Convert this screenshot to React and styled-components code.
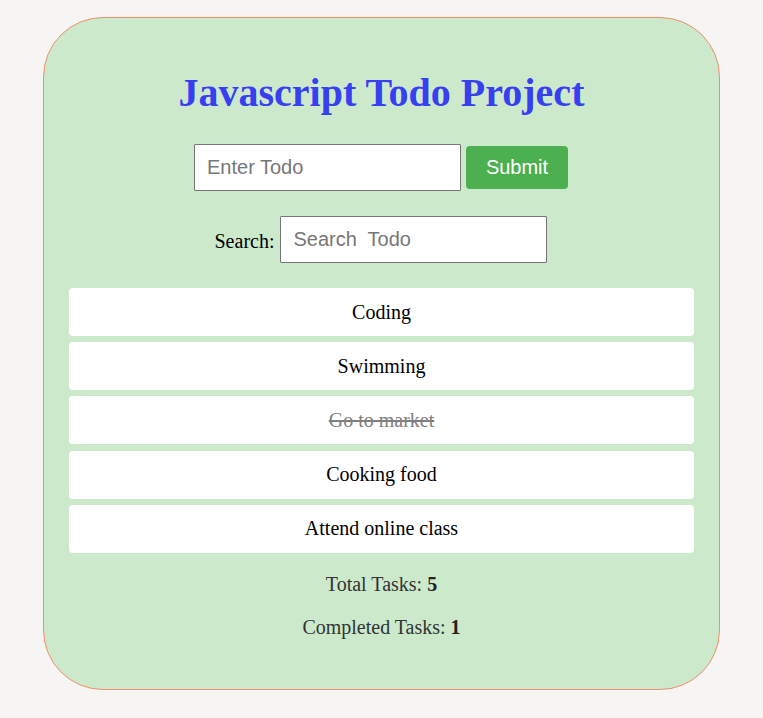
import React from "react";
import styled, { createGlobalStyle, css } from "styled-components";

const Global = createGlobalStyle`
  html, body { margin: 0; padding: 0; background: #f7f5f4; }
  body { font-family: "Liberation Serif", "Times New Roman", serif; }
  #root { padding: 17px 0 28px; }
`;

const Card = styled.div`
  width: 677px;
  margin: 0 auto;
  box-sizing: border-box;
  background: #cce9cc;
  border: 1px solid #f0906a;
  border-radius: 60px;
  padding: 22px 25px 51px;
  display: flex;
  flex-direction: column;
  align-items: stretch;
`;

const Title = styled.h1`
  margin: 30px 0 28px;
  text-align: center;
  font-size: 40px;
  font-weight: bold;
  color: #373ff0;
  line-height: 46px;
`;

const Row = styled.div`
  display: flex;
  justify-content: center;
  align-items: center;
  gap: ${(p) => p.$gap || 5}px;
  margin-bottom: ${(p) => p.$mb || 0}px;
  padding-right: 1px;
`;

const Input = styled.input`
  width: 267px;
  height: 47px;
  box-sizing: border-box;
  border: 1px solid #767676;
  border-radius: 1px;
  padding: 0 12px;
  font-family: "Liberation Sans", Arial, sans-serif;
  font-size: 20px;
  background: #fff;
  outline: none;
  &::placeholder { color: #777; }
`;

const Button = styled.button`
  width: 102px;
  height: 43px;
  border: none;
  border-radius: 4px;
  background: #4caf50;
  color: #fff;
  font-family: "Liberation Sans", Arial, sans-serif;
  font-size: 20px;
  cursor: pointer;
`;

const Label = styled.label`
  font-size: 20px;
  color: #000;
  padding-top: 4px;
`;

const List = styled.ul`
  list-style: none;
  margin: 0;
  padding: 0;
  display: flex;
  flex-direction: column;
  gap: 6.2px;
`;

const Item = styled.li`
  height: 48px;
  background: #fff;
  border-radius: 4px;
  display: flex;
  align-items: center;
  justify-content: center;
  font-size: 20px;
  color: #000;
  ${(p) =>
    p.$done &&
    css`
      text-decoration: line-through;
      color: #808080;
    `}
`;

const Stat = styled.p`
  margin: ${(p) => p.$mt}px 0 0;
  text-align: center;
  font-size: 20px;
  color: #333;
  line-height: 22px;
  b { color: #222; }
`;

const todos = [
  { text: "Coding", done: false },
  { text: "Swimming", done: false },
  { text: "Go to market", done: true },
  { text: "Cooking food", done: false },
  { text: "Attend online class", done: false },
];

export default function App() {
  return (
    <>
      <Global />
      <Card>
        <Title>Javascript Todo Project</Title>
        <Row $gap={5} $mb={25}>
          <Input placeholder="Enter Todo" />
          <Button>Submit</Button>
        </Row>
        <Row $gap={6} $mb={25}>
          <Label>Search:</Label>
          <Input placeholder="Search  Todo" />
        </Row>
        <List>
          {todos.map((t) => (
            <Item key={t.text} $done={t.done}>
              {t.text}
            </Item>
          ))}
        </List>
        <Stat $mt={20}>
          Total Tasks: <b>{todos.length}</b>
        </Stat>
        <Stat $mt={21}>
          Completed Tasks: <b>{todos.filter((t) => t.done).length}</b>
        </Stat>
      </Card>
    </>
  );
}
